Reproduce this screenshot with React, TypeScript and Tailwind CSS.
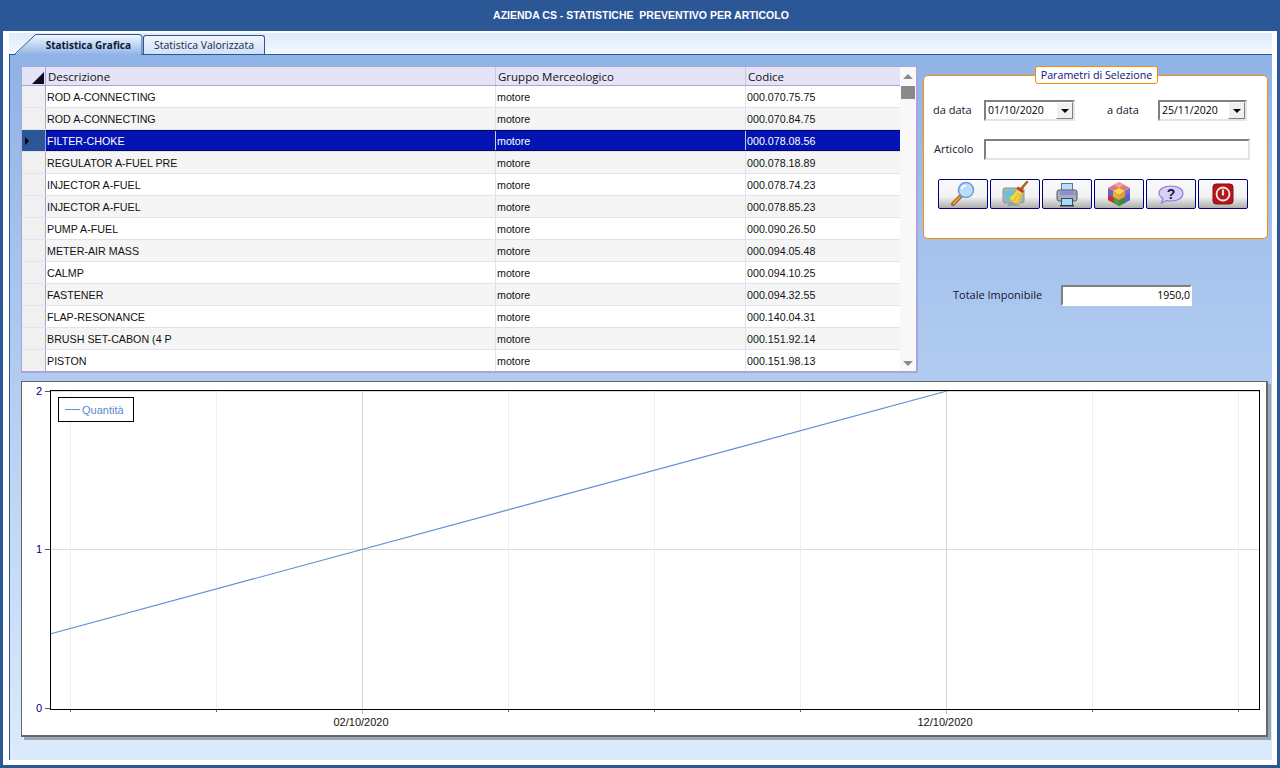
import React from "react";

const rows = [
  ["ROD A-CONNECTING", "motore", "000.070.75.75"],
  ["ROD A-CONNECTING", "motore", "000.070.84.75"],
  ["FILTER-CHOKE", "motore", "000.078.08.56"],
  ["REGULATOR A-FUEL PRE", "motore", "000.078.18.89"],
  ["INJECTOR A-FUEL", "motore", "000.078.74.23"],
  ["INJECTOR A-FUEL", "motore", "000.078.85.23"],
  ["PUMP A-FUEL", "motore", "000.090.26.50"],
  ["METER-AIR MASS", "motore", "000.094.05.48"],
  ["CALMP", "motore", "000.094.10.25"],
  ["FASTENER", "motore", "000.094.32.55"],
  ["FLAP-RESONANCE", "motore", "000.140.04.31"],
  ["BRUSH SET-CABON (4 P", "motore", "000.151.92.14"],
  ["PISTON", "motore", "000.151.98.13"],
];

const SearchIcon = () => (
  <svg width="28" height="28" viewBox="0 0 28 28">
    <path d="M12 16 L4 24" stroke="#a8661c" strokeWidth="4" strokeLinecap="round" />
    <path d="M11 17 L4.5 23.5" stroke="#eeb257" strokeWidth="1.5" strokeLinecap="round" />
    <circle cx="17" cy="10" r="7.5" fill="#bcdcfb" stroke="#6f9fdc" strokeWidth="1.6" />
    <path d="M12.5 9 A5 5 0 0 1 17 5.5" stroke="#fff" strokeWidth="1.5" fill="none" />
  </svg>
);

const BroomIcon = () => (
  <svg width="28" height="28" viewBox="0 0 28 28">
    <rect x="2" y="8" width="21" height="15" rx="2" fill="#a9b2b6" stroke="#8b9397" />
    <rect x="4.5" y="10.5" width="16" height="10" fill="#63c4df" />
    <path d="M8 23 L6 26 H19 L17 23 Z" fill="#9aa2a6" />
    <path d="M26 2 L20 9" stroke="#a8661c" strokeWidth="2.5" strokeLinecap="round" />
    <path d="M17 7 L22.5 11 L18 24 Q12 24 8 18 Q14 14 17 7 Z" fill="#f3d54a" stroke="#d0aa30" strokeWidth="0.6" />
    <path d="M17 6.5 L23 11 L21.5 13 L15.5 9 Z" fill="#c0392b" />
    <path d="M18 13 L13 21 M20 14 L16 23" stroke="#c9a22a" strokeWidth="0.8" />
  </svg>
);

const PrinterIcon = () => (
  <svg width="28" height="28" viewBox="0 0 28 28">
    <rect x="8.5" y="3.5" width="11" height="7" fill="#bcdcf8" stroke="#5d7896" />
    <rect x="4" y="10" width="20" height="11" rx="2" fill="#aab0ba" stroke="#4f5a70" />
    <rect x="7" y="11" width="14" height="4" fill="#8f8ce0" />
    <rect x="22" y="13" width="1.5" height="1.5" fill="#3fae2a" />
    <rect x="8.5" y="18.5" width="11" height="7" fill="#a9daf8" stroke="#3d4a60" />
    <rect x="7" y="25" width="14" height="1.5" fill="#2d3a50" />
  </svg>
);

const CubeIcon = () => (
  <svg width="28" height="28" viewBox="0 0 28 28">
    <path d="M14 2 L25 8 L14 14 L3 8 Z" fill="#e07a7a" />
    <path d="M14 2 L19 5 L14 8 L9 5 Z" fill="#f0a0a0" />
    <path d="M3 8 L14 14 L14 26 L3 20 Z" fill="#6a62c8" />
    <path d="M25 8 L14 14 L14 26 L25 20 Z" fill="#7a6ad8" />
    <path d="M14 8 L20 11 L14 15 L8 11 Z" fill="#f7d84a" />
    <path d="M8 11 L14 15 L14 20 L8 17 Z" fill="#e8b12c" />
    <path d="M20 11 L14 15 L14 20 L20 17 Z" fill="#e89a2c" />
    <path d="M3 15 L9 18 L9 23 L3 20 Z" fill="#c0392b" />
    <path d="M9 18 L14 20.5 L14 26 L9 23 Z" fill="#4f9a3a" />
    <path d="M14 20.5 L20 17 L20 23 L14 26 Z" fill="#3f8a30" />
    <path d="M20 16 L25 13 L25 20 L20 23 Z" fill="#5560c8" />
  </svg>
);

const HelpIcon = () => (
  <svg width="28" height="28" viewBox="0 0 28 28">
    <path d="M14 6 C21 6 26 9 26 13.5 C26 18 21 21 14 21 C12.5 21 11 21 9.5 20.5 L4.5 23 L6 18.5 C3.5 17 2 15.5 2 13.5 C2 9 7 6 14 6 Z" fill="#d3d0fa" stroke="#9b6fd8" strokeWidth="1.1" />
    <text x="14" y="18.5" textAnchor="middle" fontFamily="'Liberation Sans', sans-serif" fontSize="14" fontWeight="700" fill="#1a1440">?</text>
  </svg>
);

const PowerIcon = () => (
  <svg width="28" height="28" viewBox="0 0 28 28">
    <rect x="4" y="4" width="20" height="20" rx="3" fill="#b5141a" stroke="#8a1014" />
    <circle cx="14" cy="14" r="6.5" fill="none" stroke="#f4e6e6" strokeWidth="1.8" />
    <path d="M14 9.5 V15.5" stroke="#f4e6e6" strokeWidth="2.2" />
  </svg>
);

const icons = [SearchIcon, BroomIcon, PrinterIcon, CubeIcon, HelpIcon, PowerIcon];

const DateField = ({ value, width }: { value: string; width: string }) => (
  <div className={`${width} h-[21px] flex items-center bg-white border-2 border-t-[#808080] border-l-[#808080] border-r-[#e4e4e4] border-b-[#e4e4e4] pl-[2px]`}>
    <span className="flex-1 text-[10.5px] text-black">{value}</span>
    <span className="w-[17px] h-[17px] flex items-center justify-center bg-[#f0f0f0] border border-t-white border-l-white border-r-[#808080] border-b-[#808080]">
      <span className="w-0 h-0 border-l-[4px] border-r-[4px] border-t-[4px] border-l-transparent border-r-transparent border-t-black" />
    </span>
  </div>
);

const Chart = () => {
  const major = [362, 946];
  const minor = [70, 216, 508, 654, 800, 1092, 1238];
  const font = "'Liberation Sans', sans-serif";
  return (
    <svg width="1245" height="354" viewBox="22 382 1245 354" className="block">
      <line x1="51" x2="1259" y1="549.5" y2="549.5" stroke="#dcdcdc" />
      <line x1="51" x2="1259" y1="391.5" y2="391.5" stroke="#dcdcdc" />
      {minor.map((x) => (
        <g key={x}>
          <line x1={x + 0.5} x2={x + 0.5} y1="391" y2="709" stroke="#eeeeee" />
          <line x1={x + 0.5} x2={x + 0.5} y1="710" y2="712" stroke="#666666" />
        </g>
      ))}
      {major.map((x) => (
        <g key={x}>
          <line x1={x + 0.5} x2={x + 0.5} y1="391" y2="709" stroke="#d8d8d8" />
          <line x1={x + 0.5} x2={x + 0.5} y1="710" y2="714" stroke="#bbbbbb" />
        </g>
      ))}
      <line x1="50" y1="634" x2="947" y2="391" stroke="#5b8fd0" strokeWidth="1.1" />
      <rect x="50.5" y="390.5" width="1209" height="319" fill="none" stroke="#000" />
      {[391, 549, 708].map((y) => (
        <line key={y} x1="45" x2="50" y1={y + 0.5} y2={y + 0.5} stroke="#555" />
      ))}
      <text x="39" y="395" textAnchor="middle" fontFamily={font} fontSize="11" fill="#00008b">2</text>
      <text x="39" y="553" textAnchor="middle" fontFamily={font} fontSize="11" fill="#00008b">1</text>
      <text x="39" y="712" textAnchor="middle" fontFamily={font} fontSize="11" fill="#00008b">0</text>
      <text x="361" y="726" textAnchor="middle" fontFamily={font} fontSize="11" fill="#111">02/10/2020</text>
      <text x="945" y="726" textAnchor="middle" fontFamily={font} fontSize="11" fill="#111">12/10/2020</text>
      <rect x="58.5" y="397.5" width="75" height="24" fill="#fff" stroke="#000" />
      <line x1="65" x2="80" y1="409.5" y2="409.5" stroke="#5b8fd0" />
      <text x="82" y="414" fontFamily={font} fontSize="11" fill="#5b8ad0">Quantità</text>
    </svg>
  );
};

export default function App() {
  return (
    <div className="w-[1280px] h-[768px] overflow-hidden bg-[#2b5797] font-['Open_Sans',sans-serif] flex flex-col">
      <div className="h-[31px] shrink-0 flex items-center justify-center text-white text-[10.5px] font-bold whitespace-pre font-['Liberation_Sans',sans-serif] pl-[2px]">
        {"AZIENDA CS - STATISTICHE  PREVENTIVO PER ARTICOLO"}
      </div>
      <div className="flex-1 mx-[3px] mb-[3px] bg-white pt-[2px] pl-[6px] pb-[5px] pr-[5px] flex flex-col min-h-0">
        {/* tab strip */}
        <div className="relative z-10 h-[21px] shrink-0 flex items-end pl-[6px] bg-gradient-to-b from-[#dfeafb] to-[#f3f8fe]">
          <div className="relative w-[128px] h-[21px] -mb-[1px] flex items-center justify-end pr-[12px]">
            <svg className="absolute left-0 top-0" width="128" height="21" viewBox="0 0 128 21">
              <defs>
                <linearGradient id="tabGrad" x1="0" y1="0" x2="0" y2="1">
                  <stop offset="0" stopColor="#f4f8fe" />
                  <stop offset="1" stopColor="#8fb3e6" />
                </linearGradient>
              </defs>
              <path d="M0 21 L19 2 Q20 0.5 22 0.5 H124 Q127 0.5 127 3 V21 Z" fill="url(#tabGrad)" />
              <path d="M0 20 L19 2 Q20 0.5 22 0.5 H124 Q127 0.5 127 3 V21" fill="none" stroke="#2b5797" />
            </svg>
            <span className="relative text-[10px] font-bold text-[#0b1a33] leading-none">Statistica Grafica</span>
          </div>
          <div className="w-[122px] h-[19px] flex items-center justify-center rounded-t-[3px] border border-b-0 border-[#2b5797] bg-gradient-to-b from-[#f2f7fe] to-[#cfe0f8] text-[10.5px] text-[#1b2a44] leading-none">
            Statistica Valorizzata
          </div>
        </div>
        {/* tab page */}
        <div className="flex-1 min-h-0 border-l border-t border-[#2b5797] bg-gradient-to-b from-[#8fb3e6] to-[#dceafc] pt-[11px] pl-[11px] pr-[4px] flex flex-col">
          <div className="flex h-[307px] shrink-0">
            {/* grid */}
            <div className="w-[897px] h-[307px] border border-[#a9a4dc] border-b-2 border-r-2 bg-white flex overflow-hidden">
              <div className="flex-1 flex flex-col min-w-0">
                <div className="h-[19px] shrink-0 flex bg-[#e4e4f6] border-b border-[#a9a4dc] text-[11.5px] text-[#111] leading-[19px]">
                  <div className="w-[24px] shrink-0 border-r border-[#a9a4dc] flex items-end justify-end pr-[1px] pb-[1px]">
                    <svg width="12" height="12" viewBox="0 0 12 12">
                      <path d="M12 0 V12 H0 Z" fill="#120a20" />
                    </svg>
                  </div>
                  <div className="w-[450px] shrink-0 border-r border-[#c8c6e8] pl-[2px]">Descrizione</div>
                  <div className="w-[250px] shrink-0 border-r border-[#c8c6e8] pl-[2px]">Gruppo Merceologico</div>
                  <div className="flex-1 pl-[2px]">Codice</div>
                </div>
                {rows.map((r, i) => {
                  const sel = i === 2;
                  const rowBg = sel
                    ? "bg-[#0414b4] text-white border-y border-dotted border-black leading-[21px]"
                    : i % 2 === 0
                      ? "bg-white text-[#111] leading-[23px]"
                      : "bg-[#f5f5f5] text-[#111] leading-[23px]";
                  return (
                    <div key={i} className="h-[22px] shrink-0 flex border-b border-[#e2e2ea] text-[10.7px] font-['Liberation_Sans',sans-serif]">
                      <div className={`w-[24px] shrink-0 border-r border-[#a9a4dc] flex items-center pl-[3px] ${sel ? "bg-[#2b5797]" : "bg-[#f0f0f0]"}`}>
                        {sel && <span className="w-0 h-0 border-t-[4px] border-b-[4px] border-l-[4px] border-t-transparent border-b-transparent border-l-black" />}
                      </div>
                      <div className={`flex-1 flex min-w-0 overflow-hidden ${rowBg}`}>
                        <div className={`w-[450px] shrink-0 border-r pl-[1px] ${sel ? "border-[#c8c8e8]" : "border-[#e2e2ea]"}`}>{r[0]}</div>
                        <div className={`w-[250px] shrink-0 border-r pl-[1px] ${sel ? "border-[#c8c8e8]" : "border-[#e2e2ea]"}`}>{r[1]}</div>
                        <div className="flex-1 pl-[1px]">{r[2]}</div>
                      </div>
                    </div>
                  );
                })}
              </div>
              {/* scrollbar */}
              <div className="w-[16px] shrink-0 bg-[#f8f8f8] flex flex-col items-center">
                <div className="h-[19px] flex items-center justify-center shrink-0">
                  <span className="w-0 h-0 border-l-[5px] border-r-[5px] border-b-[5px] border-l-transparent border-r-transparent border-b-[#8a8a8a]" />
                </div>
                <div className="w-[14px] h-[13px] bg-[#8a8a8a] shrink-0" />
                <div className="flex-1" />
                <div className="h-[16px] flex items-center justify-center shrink-0">
                  <span className="w-0 h-0 border-l-[5px] border-r-[5px] border-t-[5px] border-l-transparent border-r-transparent border-t-[#8a8a8a]" />
                </div>
              </div>
            </div>
            {/* right column */}
            <div className="w-[345px] ml-[5px] pt-[9px] flex flex-col">
              <div className="relative h-[164px] rounded-[5px] border border-[#ff8c00] bg-white pl-[9px] pt-[24px]">
                <div className="absolute left-[111px] -top-[10px] w-[123px] h-[18px] rounded-[3px] border border-[#ff8c00] bg-white flex items-center justify-center text-[10.7px] text-[#10107a] leading-none">
                  Parametri di Selezione
                </div>
                <div className="flex items-center h-[21px] text-[11px] text-[#14142e]">
                  <span className="w-[51px]">da data</span>
                  <DateField value="01/10/2020" width="w-[91px]" />
                  <span className="ml-[32px] w-[51px]">a data</span>
                  <DateField value="25/11/2020" width="w-[89px]" />
                </div>
                <div className="flex items-center h-[21px] mt-[18px] text-[11px] text-[#14142e]">
                  <span className="w-[51px] pl-[1px]">Articolo</span>
                  <div className="w-[266px] h-[21px] bg-white border-2 border-t-[#808080] border-l-[#808080] border-r-[#e4e4e4] border-b-[#e4e4e4]" />
                </div>
                <div className="flex gap-[2px] mt-[19px] ml-[5px]">
                  {icons.map((Icon, i) => (
                    <button key={i} className="w-[50px] h-[30px] flex items-center justify-center rounded-[2px] border border-[#00007f] bg-[linear-gradient(to_bottom,#fafafa_0%,#f2f2f2_60%,#aeaeae_100%)] p-0">
                      <Icon />
                    </button>
                  ))}
                </div>
              </div>
              <div className="flex items-center mt-[46px] h-[21px] text-[11px] text-[#14142e]">
                <span className="ml-[30px] w-[108px]">Totale Imponibile</span>
                <div className="w-[131px] h-[21px] bg-white border-2 border-t-[#808080] border-l-[#808080] border-r-white border-b-white text-right text-[10.5px] leading-[17px] text-black">
                  1950,0
                </div>
              </div>
            </div>
          </div>
          {/* chart */}
          <div className="mt-[8px] w-[1247px] h-[356px] shrink-0 bg-white border-l border-t border-r-2 border-b-2 border-[#666] shadow-[3px_3px_0_#9aa5b5]">
            <Chart />
          </div>
        </div>
      </div>
    </div>
  );
}
